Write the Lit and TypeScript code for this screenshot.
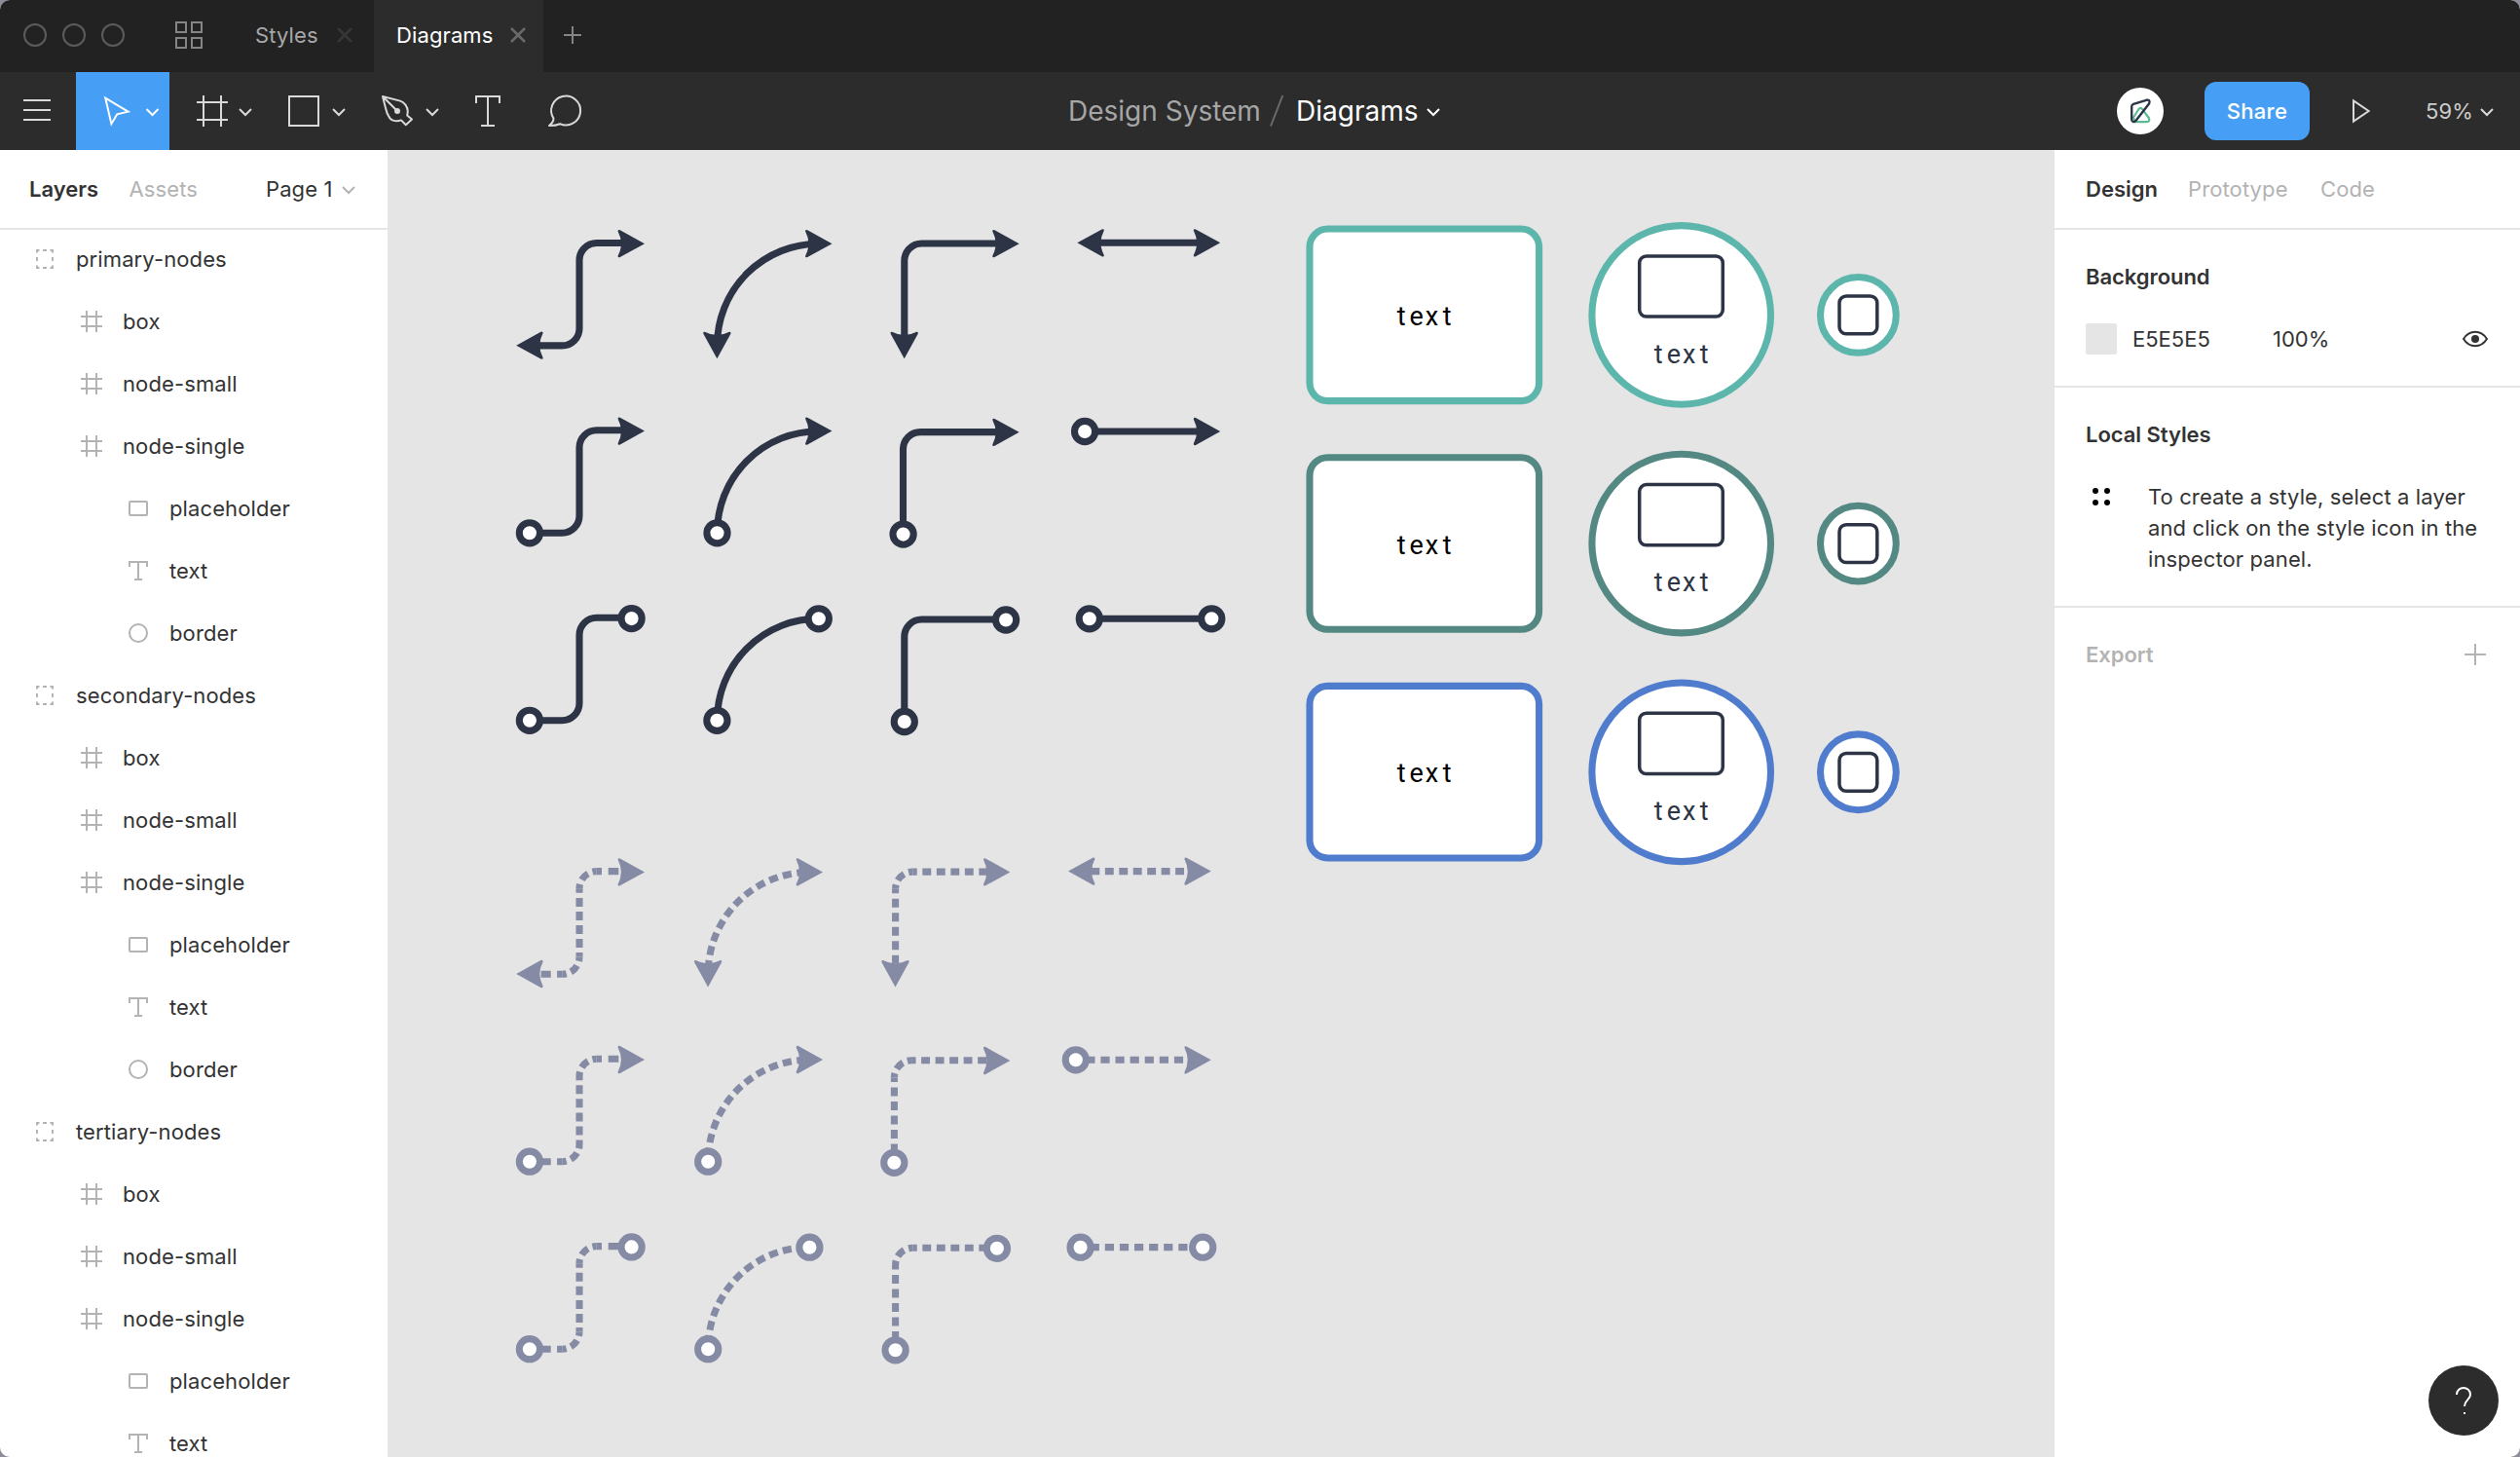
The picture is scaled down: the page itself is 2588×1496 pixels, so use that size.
import { LitElement, html, css, svg } from "lit";
import { customElement } from "lit/decorators.js";

const DARK = "#2d3446";
const MUTED = "#868ba5";
const STROKE = 7.08;
const R = 17.7;

/** Icon whose drawing coordinates are page coordinates. */
const icon = (x: number, y: number, w: number, h: number, body: unknown) =>
  html`<svg width=${w} height=${h} viewBox="${x} ${y} ${w} ${h}" fill="none">${body}</svg>`;

const chevron = (x: number, y: number, color: string) =>
  svg`<path d="M${x - 6} ${y - 3} l6 6 l6 -6" stroke=${color} stroke-width="2"/>`;

/* ---------- canvas primitives ---------- */

const arrow = (x: number, y: number, turn: number, color: string) =>
  svg`<path transform="translate(${x} ${y}) rotate(${turn})" fill=${color}
    d="M0 0L-25.2 -13.9Q-27.6 -14.8 -27.4 -12.6Q-20.8 0 -27.4 12.6Q-27.6 14.8 -25.2 13.9Z"/>`;

const knob = (x: number, y: number, color: string) =>
  svg`<circle cx=${x} cy=${y} r="10.6" fill="#fff" stroke=${color} stroke-width=${STROKE}/>`;

const line = (d: string) => svg`<path d=${d} fill="none" stroke=${DARK} stroke-width=${STROKE}/>`;

const dashed = (d: string, dash: number, gap: number, offset = dash / 2) =>
  svg`<path d=${d} fill="none" stroke=${MUTED} stroke-width=${STROKE}
    stroke-dasharray="${dash} ${gap}" stroke-dashoffset=${offset}/>`;

const corner = (d: string) => dashed(d, 9, 4.9);

const solidStep = (x0: number, x1: number, top: number, bottom: number) =>
  line(`M${x0} ${bottom}H${595 - R}A${R} ${R} 0 0 0 595 ${bottom - R}V${top + R}A${R} ${R} 0 0 1 ${595 + R} ${top}H${x1}`);

const dashedStep = (x0: number, x1: number, top: number, bottom: number) => svg`
  ${dashed(`M${595 - R} ${bottom}H${x0}`, 10.4, 6.4)}
  ${corner(`M${595 - R} ${bottom}A${R} ${R} 0 0 0 595 ${bottom - R}`)}
  ${dashed(`M595 ${bottom - R}V${top + R}`, 9, 5.05)}
  ${corner(`M595 ${top + R}A${R} ${R} 0 0 1 ${595 + R} ${top}`)}
  ${dashed(`M${595 + R} ${top}H${x1}`, 10.6, 6.7)}`;

const solidElbow = (x: number, y: number, x1: number, y1: number) =>
  line(`M${x} ${y1}V${y + R}A${R} ${R} 0 0 1 ${x + R} ${y}H${x1}`);

const dashedElbow = (x: number, y: number, x1: number, y1: number) => svg`
  ${dashed(`M${x} ${y + R}V${y1}`, 9, 5.5)}
  ${corner(`M${x} ${y + R}A${R} ${R} 0 0 1 ${x + R} ${y}`)}
  ${dashed(`M${x + R} ${y}H${x1}`, 8.9, 5.6)}`;

const arcPath = (x: number, y: number, lead = 0) =>
  `M${x} ${y}A104.3 104.3 0 0 1 ${x + 104.3} ${y - 104.3}h${lead}`;
const dashedArc = (x: number, y: number) => dashed(arcPath(x, y), 9.2, 5.35, -4.8);

/** Node caption set on a fixed 15.7px pitch, centred on cx. */
const caption = (cx: number, y: number, color: string) =>
  svg`<text class="mono" x="${cx - 23.5} ${cx - 7.9} ${cx + 7.9} ${cx + 23.5}" y=${y} fill=${color}>text</text>`;

const nodeSet = (dy: number, color: string) => svg`
  <g transform="translate(0 ${dy})">
    <rect x="1345" y="235" width="235.6" height="176.6" rx="18.5" fill="#fff" stroke=${color} stroke-width=${STROKE}/>
    ${caption(1462.6, 334, "#000")}
    <circle cx="1726.7" cy="323.4" r="91.8" fill="#fff" stroke=${color} stroke-width=${STROKE}/>
    <rect x="1683.7" y="262.9" width="85.6" height="62.2" rx="7" fill="#fff" stroke=${DARK} stroke-width="3.5"/>
    ${caption(1726.7, 372.6, DARK)}
    <circle cx="1908.4" cy="323.4" r="38.9" fill="#fff" stroke=${color} stroke-width=${STROKE}/>
    <rect x="1889" y="304" width="38.8" height="38.8" rx="7" fill="#fff" stroke=${DARK} stroke-width="3.5"/>
  </g>`;

/* ---------- layer tree ---------- */

type Kind = "group" | "frame" | "rect" | "type" | "ellipse";

const layerIcons: Record<Kind, unknown> = {
  group: svg`<path d="M3 6.5V4H5.5 M16.5 4H19V6.5 M19 19.5V22H16.5 M5.5 22H3V19.5 M9 4h4 M9 22h4 M3 11v4 M19 11v4"/>`,
  frame: svg`<path d="M6 2v22 M16 2v22 M0 8h22 M0 18h22"/>`,
  rect: svg`<rect x="2" y="6" width="18" height="14" rx="1"/>`,
  type: svg`<path d="M2 9V4H20V9 M11 4V22 M7 22h8"/>`,
  ellipse: svg`<circle cx="11" cy="13" r="9"/>`,
};

const VISIBLE_ROWS = 20;

const layers: [Kind, string, number][] = ["primary", "secondary", "tertiary"].flatMap((name) => [
  ["group", `${name}-nodes`, 0],
  ["frame", "box", 1],
  ["frame", "node-small", 1],
  ["frame", "node-single", 1],
  ["rect", "placeholder", 2],
  ["type", "text", 2],
  ["ellipse", "border", 2],
] as [Kind, string, number][]).slice(0, VISIBLE_ROWS);

@customElement("app-root")
export class AppRoot extends LitElement {
  static styles = css`
    :host {
      display: block;
      width: 2588px;
      height: 1496px;
      background: #8d8d99;
      font-family: Inter, "Liberation Sans", sans-serif;
      font-size: 22px;
      letter-spacing: 0.11px;
      color: #333;
    }
    * { box-sizing: border-box; }
    svg { display: block; flex: none; }
    .window {
      display: flex;
      flex-direction: column;
      height: 1496px;
      overflow: hidden;
      border-radius: 10px;
      background: #fff;
      position: relative;
      white-space: nowrap;
    }
    .tabs { display: flex; height: 74px; background: #222; color: #a7a7a7; line-height: 72px; }
    .tab { display: flex; justify-content: space-between; }
    .tab.first { width: 148px; padding: 0 20px 0 26px; }
    .tab.active { width: 174px; padding: 0 16px 0 23px; background: #2c2c2c; color: #fff; }
    .tools { display: flex; height: 80px; background: #2c2c2c; line-height: 80px; }
    .selected { background: #479ff5; }
    .title { display: flex; margin-left: 474px; font-size: 28px; color: #a6a6a6; letter-spacing: 0; }
    .title .project { width: 200px; padding-left: 1px; }
    .title .file { width: 128px; padding-left: 1px; color: #fff; }
    .actions { display: flex; margin-left: auto; align-items: center; }
    .share {
      width: 108px; height: 60px; border-radius: 12px; background: #479ff5; color: #fff;
      line-height: 60px; text-align: center; margin: 0 38px 0 42px; letter-spacing: 0.3px;
      font-weight: 500;
    }
    .zoom { width: 55px; margin-left: 55px; color: #ccc; }
    .body { display: flex; flex: 1; min-height: 0; }
    .left { width: 398px; overflow: hidden; }
    .head { display: flex; height: 82px; line-height: 80px; border-bottom: 2px solid #e5e5e5; }
    .left .head { padding-left: 30px; }
    .on { font-weight: 600; letter-spacing: 0; }
    .off { color: #b3b3b3; }
    .left .on { width: 102.5px; }
    .left .off { width: 140.5px; }
    .left .page { width: 76px; }
    .list { margin-top: -2px; }
    .row { display: flex; height: 64px; line-height: 64px; align-items: center; }
    .row svg { stroke: #b3b3b3; stroke-width: 2; margin-right: 21px; }
    .d0 { padding-left: 35px; }
    .d1 { padding-left: 83px; }
    .d2 { padding-left: 131px; }
    .right { width: 478px; }
    .right .head { padding-left: 32px; }
    .right .head .on { width: 105px; }
    .right .head .off { width: 136px; }
    .section { border-bottom: 2px solid #e5e5e5; padding: 0 32px; }
    h3 { margin: 0; font-size: 22px; font-weight: 600; line-height: 32px; letter-spacing: -0.05px; }
    .background { height: 162px; padding-top: 32px; }
    .fill { display: flex; align-items: center; height: 32px; margin-top: 32px; line-height: 32px; letter-spacing: 0; }
    .swatch { width: 32px; height: 32px; border-radius: 2px; background: #e5e5e5; margin-right: 16px; }
    .hex { width: 144px; }
    .fill svg { margin-left: auto; }
    .local { height: 226px; padding-top: 32px; }
    .hint { display: flex; margin-top: 32px; line-height: 32px; }
    .export { display: flex; justify-content: space-between; padding: 32px 32px 0; color: #b3b3b3; }
    .mono {
      font-family: Roboto, "Liberation Sans", sans-serif;
      font-size: 27px;
      letter-spacing: 0;
      text-anchor: middle;
    }
    .help { position: absolute; right: 22px; bottom: 22px; }
  `;

  private tabs() {
    return html`<div class="tabs">
      ${icon(0, 0, 236, 74, svg`
        <g stroke="#5c5c5c" stroke-width="2"><circle cx="36" cy="36" r="11"/><circle cx="76" cy="36" r="11"/><circle cx="116" cy="36" r="11"/></g>
        <path stroke="#858585" stroke-width="2" d="M181 23h10v10h-10z M197 23h10v10h-10z M181 39h10v10h-10z M197 39h10v10h-10z"/>`)}
      <div class="tab first"><span>Styles</span>
        ${icon(344, 0, 20, 74, svg`<path stroke="#363636" stroke-width="2.6" d="M347 29l14 14 M361 29l-14 14"/>`)}</div>
      <div class="tab active"><span>Diagrams</span>
        ${icon(522, 0, 20, 74, svg`<path stroke="#696969" stroke-width="2.6" d="M525 29l14 14 M539 29l-14 14"/>`)}</div>
      ${icon(558, 0, 60, 74, svg`<path stroke="#858585" stroke-width="2" d="M579 36h18 M588 27v18"/>`)}
    </div>`;
  }

  private toolbar() {
    const c = "#d9d9d9";
    return html`<div class="tools">
      ${icon(0, 74, 78, 80, svg`<path stroke=${c} stroke-width="2" d="M24 103h28 M24 113h28 M24 123h28"/>`)}
      <div class="selected">${icon(78, 74, 96, 80, svg`
        <path stroke="#fff" stroke-width="2" d="M108.2 100.6L131.6 114.6L120.2 117.4L114.4 127.2Z"/>${chevron(156.5, 115, "#fff")}`)}</div>
      ${icon(174, 74, 96, 80, svg`<path stroke=${c} stroke-width="2" d="M209 98v32 M227 98v32 M202 105h32 M202 123h32"/>${chevron(252, 115, c)}`)}
      ${icon(270, 74, 96, 80, svg`<rect x="297" y="99" width="30" height="30" stroke=${c} stroke-width="2"/>${chevron(348, 115, c)}`)}
      ${icon(366, 74, 96, 80, svg`
        <path stroke=${c} stroke-width="2" stroke-linejoin="round" d="M393 99L411 103.6C415.5 105 418.8 110 418.8 114.5L418.2 118.4L423 122.5L416.8 128.2L412 123.4C408 125 402.5 124.4 400.4 121.4C397.5 117.5 396.6 114 396 111Z M393 99L407 113"/>
        <circle cx="408" cy="114" r="3" fill=${c}/>${chevron(444, 115, c)}`)}
      ${icon(462, 74, 80, 80, svg`<path stroke=${c} stroke-width="2" d="M489 106V99H513V106 M501 99V129 M494 129h14"/>`)}
      ${icon(542, 74, 80, 80, svg`<path stroke=${c} stroke-width="2" stroke-linejoin="round" d="M568.5 121.6A15 15 0 1 1 575 127.2Q570 129.2 564 129Q568.4 125.5 568.5 121.6Z"/>`)}
      <div class="title">
        <span class="project">Design System</span>
        ${icon(1296, 74, 34, 80, svg`<path stroke="#6c6c6c" stroke-width="2" d="M1305 129.5L1317.3 98"/>`)}
        <span class="file">Diagrams</span>
        ${icon(1458, 74, 30, 80, chevron(1472, 115, "#fff"))}
      </div>
      <div class="actions">
        ${icon(2174, 90, 48, 48, svg`<circle cx="2198" cy="114" r="24" fill="#fff"/>
          <path stroke="#5dbb92" stroke-width="2.2" stroke-linejoin="round" d="M2196.5 112Q2198.3 109.6 2200.3 112.3L2206.8 121Q2208.4 124.8 2204.5 125.2H2192.5L2191 120.5Z"/>
          <path stroke="#2d3446" stroke-width="2.4" stroke-linejoin="round" d="M2189.2 109.5Q2189.2 107.4 2191 106.8L2204.2 102.8Q2208.6 102 2207.2 106.2L2193.6 123.8Q2190.2 126.8 2189.2 123Z"/>`)}
        <div class="share">Share</div>
        ${icon(2410, 74, 26, 80, svg`<path stroke=${c} stroke-width="2" d="M2417 103.5V124.5L2432.6 114Z"/>`)}
        <div class="zoom">59%</div>
        ${icon(2546, 74, 42, 80, chevron(2554, 115, c))}
      </div>
    </div>`;
  }

  private canvas() {
    const a = (x: number, y: number, t = 0) => arrow(x, y, t, DARK);
    const k = (x: number, y: number) => knob(x, y, DARK);
    const b = (x: number, y: number, t = 0) => arrow(x, y, t, MUTED);
    const m = (x: number, y: number) => knob(x, y, MUTED);
    return html`<svg width="1712" height="1342" viewBox="398 154 1712 1342">
      <rect x="398" y="154" width="1712" height="1342" fill="#e5e5e5"/>
      ${solidStep(552, 640, 249.5, 354.9)}${a(530.2, 354.7, 180)}${a(662, 250.2)}
      ${line(arcPath(736.5, 354.6))}${a(736.4, 368.2, 90)}${a(854.5, 250.2)}
      ${solidElbow(928.8, 250, 1024, 346)}${a(928.7, 368.2, 90)}${a(1046.7, 250.2)}
      ${line("M1128 249.3H1232")}${a(1106.4, 249.3, 180)}${a(1253.2, 249.3)}

      ${solidStep(552, 640, 441.7, 547.3)}${k(543.9, 547.3)}${a(662, 442.6)}
      ${line(arcPath(736.5, 547))}${k(736.5, 547.3)}${a(854.5, 442.6)}
      ${solidElbow(927.5, 443.6, 1024, 540)}${k(927.6, 548.6)}${a(1046.7, 443.8)}
      ${line("M1120 443H1232")}${k(1114.1, 443)}${a(1253.2, 443)}

      ${solidStep(552, 644, 634.2, 739.8)}${k(543.9, 739.8)}${k(648.6, 635.1)}
      ${line(arcPath(736.5, 739.4))}${k(736.4, 739.8)}${k(840.8, 635.3)}
      ${solidElbow(928.8, 636, 1024, 732)}${k(928.8, 741)}${k(1033.1, 636.5)}
      ${line("M1125 635.3H1238")}${k(1118.8, 635.3)}${k(1244.3, 635.3)}

      ${dashedStep(555.6, 636, 894.6, 1000.3)}${b(530.2, 1000, 180)}${b(662, 895.4)}
      ${dashedArc(727.2, 999.8)}${b(727.1, 1013.5, 90)}${b(845.1, 895.4)}
      ${dashedElbow(919.6, 895.1, 1016, 992)}${b(919.5, 1013.5, 90)}${b(1037.4, 895.4)}
      ${dashed("M1120.4 894.6H1222", 8.9, 5.55, 0)}${b(1097, 894.6, 180)}${b(1243.8, 894.6)}

      ${dashedStep(546, 636, 1087.2, 1192.7)}${m(543.9, 1192.7)}${b(662, 1088)}
      ${dashedArc(727.2, 1192.4)}${m(727.2, 1192.7)}${b(845.1, 1088)}
      ${dashedElbow(918.4, 1088.7, 1014, 1184)}${m(918.3, 1193.8)}${b(1037.4, 1089)}
      ${dashed("M1115.3 1088.3H1222", 9.2, 5.9, 0)}${m(1104.8, 1088.3)}${b(1243.8, 1088.3)}

      ${dashedStep(546, 645, 1279.6, 1385.2)}${m(543.9, 1385.2)}${m(648.6, 1280.4)}
      ${dashedArc(727.2, 1384.8)}${m(727.2, 1385.2)}${m(831.4, 1280.7)}
      ${dashedElbow(919.6, 1281.2, 1016, 1378)}${m(919.6, 1386.3)}${m(1023.9, 1281.8)}
      ${dashed("M1119.7 1280.6H1228", 9.2, 5.9, 0)}${m(1109.6, 1280.7)}${m(1235.2, 1280.7)}

      ${nodeSet(0, "#5db6ac")}
      ${nodeSet(234.7, "#548983")}
      ${nodeSet(469.4, "#507ccd")}
    </svg>`;
  }

  private inspector() {
    return html`<div class="right">
      <div class="head"><span class="on">Design</span><span class="off">Prototype</span><span class="off">Code</span></div>
      <div class="section background">
        <h3>Background</h3>
        <div class="fill">
          <div class="swatch"></div><span class="hex">E5E5E5</span><span>100%</span>
          ${icon(2528, 336, 28, 24, svg`<path stroke="#333" stroke-width="2" d="M2530 348C2536 338.4 2548 338.4 2554 348C2548 357.6 2536 357.6 2530 348Z"/><circle cx="2542" cy="348" r="4" fill="#333"/>`)}
        </div>
      </div>
      <div class="section local">
        <h3>Local Styles</h3>
        <div class="hint">
          ${icon(2142, 494, 64, 32, svg`<g fill="#000"><circle cx="2152" cy="504" r="3"/><circle cx="2164" cy="504" r="3"/><circle cx="2152" cy="516" r="3"/><circle cx="2164" cy="516" r="3"/></g>`)}
          <div>To create a style, select a layer<br>and click on the style icon in the<br>inspector panel.</div>
        </div>
      </div>
      <div class="export"><h3>Export</h3>
        ${icon(2528, 656, 28, 32, svg`<path stroke="#b3b3b3" stroke-width="2" d="M2531 672h22 M2542 661v22"/>`)}
      </div>
    </div>`;
  }

  render() {
    return html`<div class="window">
      ${this.tabs()}${this.toolbar()}
      <div class="body">
        <div class="left">
          <div class="head"><span class="on">Layers</span><span class="off">Assets</span><span class="page">Page 1</span>
            ${icon(349, 154, 40, 80, chevron(358, 195, "#b3b3b3"))}</div>
          <div class="list">${layers.map(([kind, name, depth]) => html`
            <div class="row d${depth}"><svg width="22" height="26" viewBox="0 0 22 26" fill="none">${layerIcons[kind]}</svg><span>${name}</span></div>`)}</div>
        </div>
        ${this.canvas()}
        ${this.inspector()}
      </div>
      <div class="help">${icon(2494, 1402, 72, 72, svg`<circle cx="2530" cy="1438" r="36" fill="#2c2c2c"/>
        <path stroke="#fff" stroke-width="2" d="M2523 1432C2523 1422.6 2537 1422.6 2537 1432C2537 1437 2531 1437.5 2531 1444"/>
        <path fill="#fff" d="M2530 1450h2v2h-2z"/>`)}</div>
    </div>`;
  }
}
